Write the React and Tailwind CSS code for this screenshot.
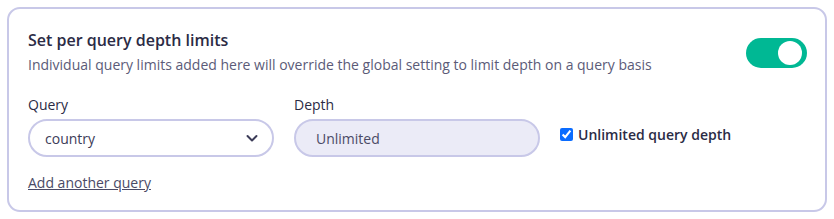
export default function App() {
  return (
    <div className="w-[834px] h-[219px] bg-white p-[7px] font-['Open_Sans',sans-serif]">
      <div className="h-[205px] rounded-[13px] border-2 border-[#c8c8e8] pl-[19px] pr-[18px] pt-[20px]">
        <div className="flex items-start justify-between">
          <div>
            <h2 className="text-[16px] leading-[22px] font-semibold text-[#2b2b45]">Set per query depth limits</h2>
            <p className="mt-[4px] text-[14px] leading-[20px] text-[#5b5b78]">
              Individual query limits added here will override the global setting to limit depth on a query basis
            </p>
          </div>
          <div className="mt-[9px] flex h-[30px] w-[61px] items-center justify-end rounded-full bg-[#00b894] pr-[5px]">
            <div className="h-[24px] w-[24px] rounded-full bg-white" />
          </div>
        </div>
        <div className="mt-[20px] flex items-end gap-5">
          <div className="w-[246px]">
            <div className="text-[14px] leading-[20px] font-medium text-[#2b2b45]">Query</div>
            <div className="mt-[4px] flex h-[38px] items-center justify-between rounded-full border-2 border-[#c8c8e8] bg-white pl-[15px] pr-[12px]">
              <span className="text-[14px] font-medium text-[#3c3c58]">country</span>
              <svg width="16" height="16" viewBox="0 0 16 16" fill="none">
                <path d="M3.5 6l4.5 4.5L12.5 6" stroke="#3c3c58" strokeWidth="2" strokeLinecap="round" strokeLinejoin="round" />
              </svg>
            </div>
          </div>
          <div className="w-[246px]">
            <div className="text-[14px] leading-[20px] font-medium text-[#2b2b45]">Depth</div>
            <div className="mt-[4px] flex h-[38px] items-center rounded-full border-2 border-[#c8c8e8] bg-[#ebebf7] pl-[20px]">
              <span className="text-[14px] font-medium text-[#4a4a66]">Unlimited</span>
            </div>
          </div>
          <label className="mb-[12px] flex items-center gap-[5px]">
            <input type="checkbox" defaultChecked className="h-[13px] w-[13px] accent-[#0a6cff]" />
            <span className="text-[14px] font-semibold text-[#2b2b45]">Unlimited query depth</span>
          </label>
        </div>
        <a href="#" className="mt-[16px] inline-block text-[14px] leading-[20px] text-[#4a4a66] underline">Add another query</a>
      </div>
    </div>
  );
}
